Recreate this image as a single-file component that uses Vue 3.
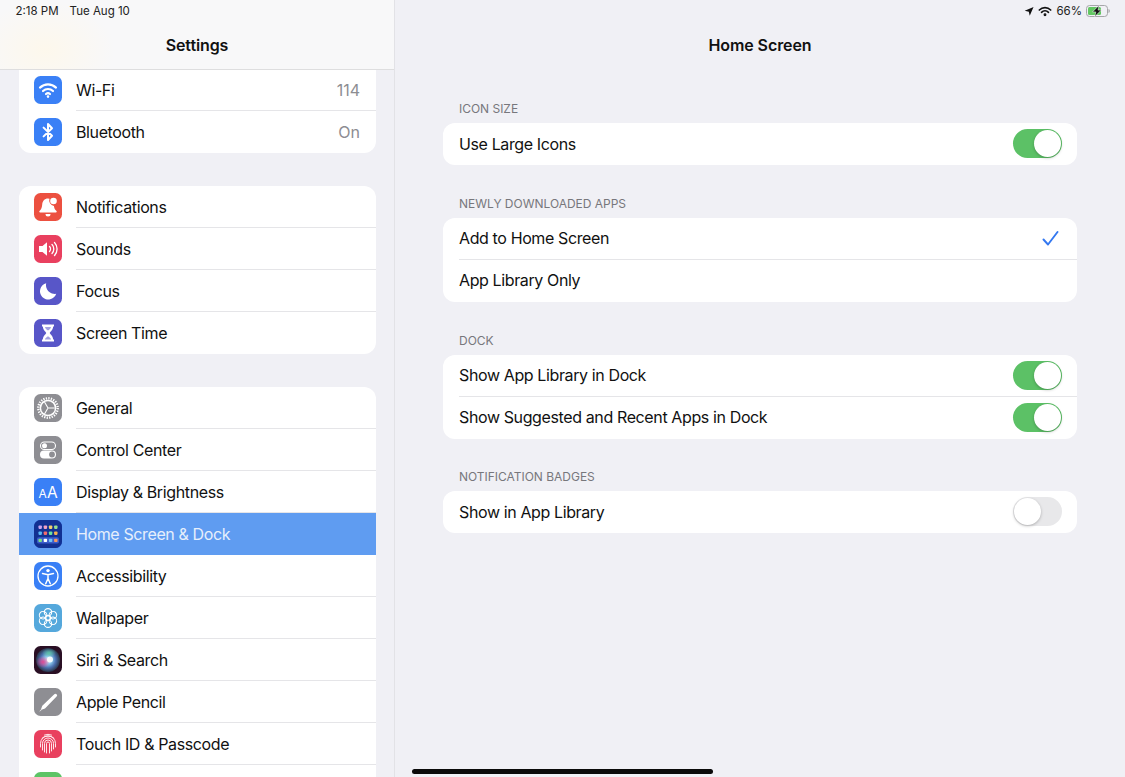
<script setup>
const groups = [
  [
    { id: 'wifi', label: 'Wi-Fi', value: '114', color: '#3a80f6' },
    { id: 'bt', label: 'Bluetooth', value: 'On', color: '#3a80f6' },
  ],
  [
    { id: 'bell', label: 'Notifications', color: '#ec5040' },
    { id: 'sound', label: 'Sounds', color: '#e9405f' },
    { id: 'moon', label: 'Focus', color: '#5856c8' },
    { id: 'hour', label: 'Screen Time', color: '#5856c8' },
  ],
  [
    { id: 'gear', label: 'General', color: '#8e8e93' },
    { id: 'ctrl', label: 'Control Center', color: '#8e8e93' },
    { id: 'aa', label: 'Display & Brightness', color: '#3a80f6' },
    { id: 'home', label: 'Home Screen & Dock', color: '#1c3fc0', active: true },
    { id: 'access', label: 'Accessibility', color: '#3a80f6' },
    { id: 'flower', label: 'Wallpaper', color: '#55a8dc' },
    { id: 'siri', label: 'Siri & Search', color: '#2a0f24' },
    { id: 'pencil', label: 'Apple Pencil', color: '#8e8e93' },
    { id: 'touch', label: 'Touch ID & Passcode', color: '#e9405f' },
    { id: 'battery', label: '', color: '#5dc466' },
  ],
]
const sections = [
  { title: 'Icon Size', rows: [{ label: 'Use Large Icons', toggle: true }] },
  { title: 'Newly Downloaded Apps', rows: [{ label: 'Add to Home Screen', check: true }, { label: 'App Library Only' }] },
  { title: 'Dock', rows: [{ label: 'Show App Library in Dock', toggle: true }, { label: 'Show Suggested and Recent Apps in Dock', toggle: true }] },
  { title: 'Notification Badges', rows: [{ label: 'Show in App Library', toggle: false }] },
]
const homeDots = [
  ['#c9a4ef', '#f2a3c4', '#f4d06f', '#9be08f'],
  ['#58b7f5', '#f46b6b', '#6be0a0', '#f5b04f'],
]
const dockDots = ['#7ee081', '#ffffff', '#6fc4f7', '#f59a62']
const petals = [0, 60, 120, 180, 240, 300]
</script>

<template>
  <div class="ipad">
    <aside class="sidebar">
      <header class="side-nav">
        <div class="status-left"><span>2:18 PM</span><span>Tue Aug 10</span></div>
        <h1 class="nav-title">Settings</h1>
      </header>
      <div class="side-list">
        <section v-for="(group, gi) in groups" :key="gi" class="side-card">
          <div v-for="row in group" :key="row.id" class="side-row" :class="{ active: row.active }">
            <span class="app-icon" :style="{ background: row.color }">
              <svg viewBox="0 0 28 28" width="28" height="28">
                <g v-if="row.id === 'wifi'" fill="none" stroke="#fff" stroke-linecap="round" stroke-width="2.2">
                  <path d="M6 11.6a11.5 11.5 0 0 1 16 0" />
                  <path d="M9 15a7.3 7.3 0 0 1 10 0" />
                  <path d="M12 18a3 3 0 0 1 4 0" />
                  <circle cx="14" cy="20.6" r=".6" fill="#fff" stroke-width="1.4" />
                </g>
                <path v-else-if="row.id === 'bt'" d="M9.6 9.6 18 17.8 14 22V6l4 4.2-8.4 8.2" fill="none" stroke="#fff" stroke-width="2" stroke-linejoin="round" stroke-linecap="round" />
                <g v-else-if="row.id === 'bell'" fill="#fff">
                  <path d="M14 5.5c-3.6 0-5.6 2.7-5.8 6-.2 3-.9 5-2.700 6.600-.5.5-.2 1.400.6 1.400h15.800c.8 0 1.100-.9.600-1.400-1.500-1.400-2.300-3-2.600-5.200A5.400 5.400 0 0 1 15.500 5.700 7 7 0 0 0 14 5.500z" />
                  <circle cx="19.500" cy="8" r="3.300" />
                  <path d="M11.500 21h5a2.500 2.500 0 0 1-5 0z" />
                </g>
                <g v-else-if="row.id === 'sound'">
                  <path d="M5 11h3.500L13 7.200v13.600L8.500 17H5z" fill="#fff" />
                  <g fill="none" stroke="#fff" stroke-width="1.300" stroke-linecap="round">
                    <path d="M15.500 11.500a3.500 3.500 0 0 1 0 5" />
                    <path d="M18 9.500a6.500 6.500 0 0 1 0 9" />
                    <path d="M20.500 7.500a9.500 9.500 0 0 1 0 13" />
                  </g>
                </g>
                <path v-else-if="row.id === 'moon'" d="M12.200 6.200a8.300 8.300 0 1 0 10 10.600A8.800 8.800 0 0 1 12.200 6.200z" fill="#fff" />
                <g v-else-if="row.id === 'hour'">
                  <path d="M8 5.500h12v2h-.9c0 3.600-2.700 4.800-3.400 6.500.7 1.700 3.400 2.900 3.400 6.500h.9v2H8v-2h.9c0-3.600 2.700-4.800 3.400-6.500-.7-1.700-3.400-2.900-3.400-6.500H8z" fill="#fff" />
                  <path d="M11 8h6c-.2 1.500-1.400 2.500-3 3.500-1.600-1-2.800-2-3-3.500zM10.900 20.500c.3-1.500 1.700-2.500 3.100-3.300 1.400.8 2.800 1.800 3.100 3.300z" fill="#5856c8" opacity=".55" />
                </g>
                <g v-else-if="row.id === 'gear'" fill="none" stroke="#fff">
                  <circle cx="14" cy="14" r="9.700" stroke-width="2.400" stroke-dasharray="1.300 1.240" />
                  <circle cx="14" cy="14" r="7.600" stroke-width="1.500" />
                  <path d="M14 14 10.500 8M14 14h6.800M14 14l-3.500 6" stroke-width="1.100" />
                </g>
                <g v-else-if="row.id === 'ctrl'">
                  <rect x="6.500" y="6" width="15" height="7.500" rx="3.750" fill="none" stroke="#fff" stroke-width="1.100" />
                  <circle cx="10.500" cy="9.750" r="2.500" fill="#fff" />
                  <rect x="6" y="14.500" width="16" height="8" rx="4" fill="#fff" />
                  <circle cx="18" cy="18.500" r="2.900" fill="#8e8e93" />
                </g>
                <g v-else-if="row.id === 'aa'" fill="#fff" font-family="Inter, sans-serif">
                  <text x="4.500" y="19.500" font-size="12">A</text>
                  <text x="13" y="19.500" font-size="15.500">A</text>
                </g>
                <g v-else-if="row.id === 'home'">
                  <rect width="28" height="28" fill="#123192" />
                  <template v-for="(line, li) in homeDots" :key="li">
                    <rect v-for="(c, ci) in line" :key="ci" :x="4.500 + ci * 5.200" :y="5.500 + li * 6" width="3.400" height="3.400" rx=".8" :fill="c" />
                  </template>
                  <rect x="3" y="17.200" width="22" height="6.400" rx="1.800" fill="#3a5ccc" />
                  <rect v-for="(c, ci) in dockDots" :key="'d' + ci" :x="4.500 + ci * 5.200" y="18.700" width="3.400" height="3.400" rx=".8" :fill="c" />
                </g>
                <g v-else-if="row.id === 'access'" fill="none" stroke="#fff">
                  <circle cx="14" cy="14" r="10" stroke-width="1.300" />
                  <circle cx="14" cy="8.600" r="1.700" fill="#fff" stroke="none" />
                  <path d="M8.500 11.500 14 12.700l5.500-1.200M14 12.700v4M14 16.500l-2.300 5.200M14 16.500l2.300 5.200" stroke-width="1.500" stroke-linecap="round" />
                </g>
                <g v-else-if="row.id === 'flower'" fill="none" stroke="#fff" stroke-width="1.100">
                  <circle v-for="a in petals" :key="a" cx="14" cy="8.300" r="3.700" :transform="`rotate(${a} 14 14)`" />
                  <circle cx="14" cy="14" r="2.600" />
                </g>
                <g v-else-if="row.id === 'siri'">
                  <defs>
                    <radialGradient id="siriA" cx="50%" cy="50%" r="50%">
                      <stop offset="0" stop-color="#fff" />
                      <stop offset=".3" stop-color="#8fcdf0" />
                      <stop offset=".65" stop-color="#4a6fae" />
                      <stop offset="1" stop-color="#2a3548" />
                    </radialGradient>
                    <radialGradient id="siriB" cx="50%" cy="50%" r="50%">
                      <stop offset="0" stop-color="#e6428f" stop-opacity=".95" />
                      <stop offset="1" stop-color="#e6428f" stop-opacity="0" />
                    </radialGradient>
                    <radialGradient id="siriC" cx="50%" cy="50%" r="50%">
                      <stop offset="0" stop-color="#5fd6a0" stop-opacity=".8" />
                      <stop offset="1" stop-color="#5fd6a0" stop-opacity="0" />
                    </radialGradient>
                  </defs>
                  <circle cx="14" cy="14" r="12" fill="url(#siriA)" />
                  <ellipse cx="9" cy="16" rx="7" ry="6" fill="url(#siriB)" />
                  <ellipse cx="15" cy="7" rx="7" ry="4.500" fill="url(#siriC)" />
                  <circle cx="16" cy="13.500" r="3" fill="#fff" opacity=".85" />
                </g>
                <g v-else-if="row.id === 'pencil'" fill="#fff">
                  <path d="M20.300 6.300a1.600 1.600 0 0 1 2.300 0 1.600 1.600 0 0 1 0 2.300L11 20.500l-3.500 1.300a.4.4 0 0 1-.5-.5l1.300-3.500z" />
                  <path d="M5.500 23.200 7 21.500l.5.500-1.700 1.500z" />
                </g>
                <g v-else-if="row.id === 'touch'" fill="none" stroke="#fff" stroke-width=".95" stroke-linecap="round" opacity=".92">
                  <path d="M6.500 17v-3.500a7.500 7.500 0 0 1 15 0V17" />
                  <path d="M8.500 20v-6.500a5.500 5.500 0 0 1 11 0V19" />
                  <path d="M10.500 22v-8.500a3.500 3.500 0 0 1 7 0V21" />
                  <path d="M12.500 23v-9.500a1.500 1.500 0 0 1 3 0V23" />
                  <path d="M8 8.200a8.500 8.500 0 0 1 12 0" />
                  <path d="M10.500 5a9 9 0 0 1 7 0" />
                </g>
              </svg>
            </span>
            <span class="side-text">
              <span class="row-label">{{ row.label }}</span>
              <span v-if="row.value" class="row-value">{{ row.value }}</span>
            </span>
          </div>
        </section>
      </div>
    </aside>

    <main class="detail">
      <header class="detail-nav">
        <div class="status-right">
          <svg width="10" height="11" viewBox="0 0 11 11"><path d="M10.500.5 6.300 10.200 5.300 5.700.8 4.700z" fill="#111" /></svg>
          <svg width="14" height="11" viewBox="0 0 16 12" fill="none" stroke="#111" stroke-width="1.900" stroke-linecap="round">
            <path d="M1.500 4.300a9.300 9.300 0 0 1 13 0" />
            <path d="M4 6.900a5.700 5.700 0 0 1 8 0" />
            <circle cx="8" cy="9.700" r=".7" fill="#111" />
          </svg>
          <span>66%</span>
          <svg width="24" height="12" viewBox="0 0 24 12">
            <rect x=".5" y=".5" width="21" height="11" rx="3" fill="none" stroke="#a5a5a8" />
            <rect x="2" y="2" width="13" height="8" rx="1.500" fill="#62c762" />
            <path d="M22.500 4v4c.8-.3 1.300-1.100 1.300-2s-.5-1.700-1.300-2z" fill="#a5a5a8" />
            <path d="M13 .4 6.500 6.900h3.300l-1 4.700 6.500-6.500h-3.300z" fill="#111" stroke="#fff" stroke-width=".5" />
          </svg>
        </div>
        <h1 class="nav-title">Home Screen</h1>
      </header>
      <div class="detail-body">
        <section v-for="s in sections" :key="s.title" class="block">
          <h2 class="block-title">{{ s.title }}</h2>
          <div class="block-card">
            <div v-for="r in s.rows" :key="r.label" class="block-row">
              <span class="row-label">{{ r.label }}</span>
              <svg v-if="r.check" class="check" width="17" height="15" viewBox="0 0 17 15" fill="none">
                <path d="M1.500 8.500 6 13.500 15.500 1" stroke="#3478f0" stroke-width="1.900" stroke-linecap="round" stroke-linejoin="round" />
              </svg>
              <span v-if="r.toggle !== undefined" class="toggle" :class="{ on: r.toggle }"><span class="knob"></span></span>
            </div>
          </div>
        </section>
      </div>
    </main>
    <div class="home-bar"></div>
  </div>
</template>

<style>
html, body { margin: 0; background: #f0f0f5; }
</style>

<style scoped>
.ipad {
  position: relative;
  display: flex;
  width: 1125px;
  height: 777px;
  overflow: hidden;
  background: #f0f0f5;
  color: #111;
  font-family: Inter, "Liberation Sans", sans-serif;
}
.sidebar {
  display: flex;
  flex-direction: column;
  flex: 0 0 395px;
  box-sizing: border-box;
  border-right: 1px solid #e2e2e6;
  overflow: hidden;
}
.side-nav {
  position: relative;
  box-sizing: border-box;
  flex: 0 0 70px;
  border-bottom: 1px solid #dededf;
  background:
    radial-gradient(ellipse 70px 50px at 45px 50px, #fdf8ec 0%, rgba(253, 248, 236, 0) 100%),
    #f8f8f9;
}
.status-left {
  display: flex;
  gap: 11px;
  padding: 4px 0 0 15.500px;
  font-size: 11.500px;
  line-height: 14px;
  color: #222;
}
.nav-title {
  margin: 0;
  padding-top: 15px;
  font-size: 16px;
  line-height: 24px;
  font-weight: 600;
  letter-spacing: -0.1px;
  text-align: center;
  color: #111;
}
.side-list {
  display: flex;
  flex-direction: column;
  gap: 33px;
  padding: 0 18px 0 19px;
  margin-top: -1px;
}
.side-card {
  background: #fff;
  border-radius: 0 0 12px 12px;
  overflow: hidden;
}
.side-card + .side-card { border-radius: 12px; }
.side-row {
  display: flex;
  align-items: center;
  height: 42px;
  padding-left: 15px;
}
.app-icon {
  flex: none;
  width: 28px;
  height: 28px;
  border-radius: 6.500px;
  overflow: hidden;
}
.app-icon svg { display: block; }
.side-text {
  flex: 1;
  align-self: stretch;
  display: flex;
  align-items: center;
  justify-content: space-between;
  margin-left: 14px;
  padding-right: 16px;
  box-shadow: inset 0 -1px 0 #e5e5e8;
}
.side-row:last-child .side-text { box-shadow: none; }
.side-row.active { background: #5f9cf1; }
.side-row.active .side-text { box-shadow: none; color: #e6effc; }
.row-label {
  font-size: 16px;
  line-height: 20px;
  letter-spacing: -0.38px;
}
.row-value {
  font-size: 16px;
  color: #8d8d92;
}
.detail {
  flex: 1;
  display: flex;
  flex-direction: column;
  min-width: 0;
}
.detail-nav {
  flex: 0 0 70px;
  box-sizing: border-box;
}
.status-right {
  display: flex;
  justify-content: flex-end;
  align-items: center;
  gap: 4px;
  height: 14px;
  padding: 4px 15px 0 0;
  font-size: 11.500px;
  line-height: 14px;
  color: #222;
}
.detail-body {
  display: flex;
  flex-direction: column;
  gap: 30.750px;
  padding: 31px 48px 0 48px;
}
.block-title {
  margin: 0 0 7px 16px;
  font-size: 12px;
  line-height: 15px;
  font-weight: 400;
  letter-spacing: -0.02px;
  text-transform: uppercase;
  color: #77777c;
}
.block-card {
  background: #fff;
  border-radius: 12px;
  overflow: hidden;
}
.block-row {
  display: flex;
  align-items: center;
  justify-content: space-between;
  box-sizing: border-box;
  height: 42px;
  margin-left: 16px;
  padding: 0 15px 1px 0;
  box-shadow: inset 0 -1px 0 #e5e5e8;
}
.block-row:last-child { box-shadow: none; }
.check { margin-right: 3px; }
.toggle {
  display: flex;
  box-sizing: border-box;
  width: 49px;
  height: 29px;
  padding: 1px;
  border-radius: 15px;
  background: #e8e8ea;
}
.toggle.on {
  justify-content: flex-end;
  background: #5cc166;
}
.knob {
  width: 27px;
  height: 27px;
  border-radius: 50%;
  background: #fff;
  box-shadow: 0 1px 3px rgba(0, 0, 0, 0.25);
}
.home-bar {
  position: absolute;
  left: 412px;
  bottom: 3px;
  width: 301px;
  height: 5px;
  border-radius: 3px;
  background: #0a0a0a;
}
</style>
